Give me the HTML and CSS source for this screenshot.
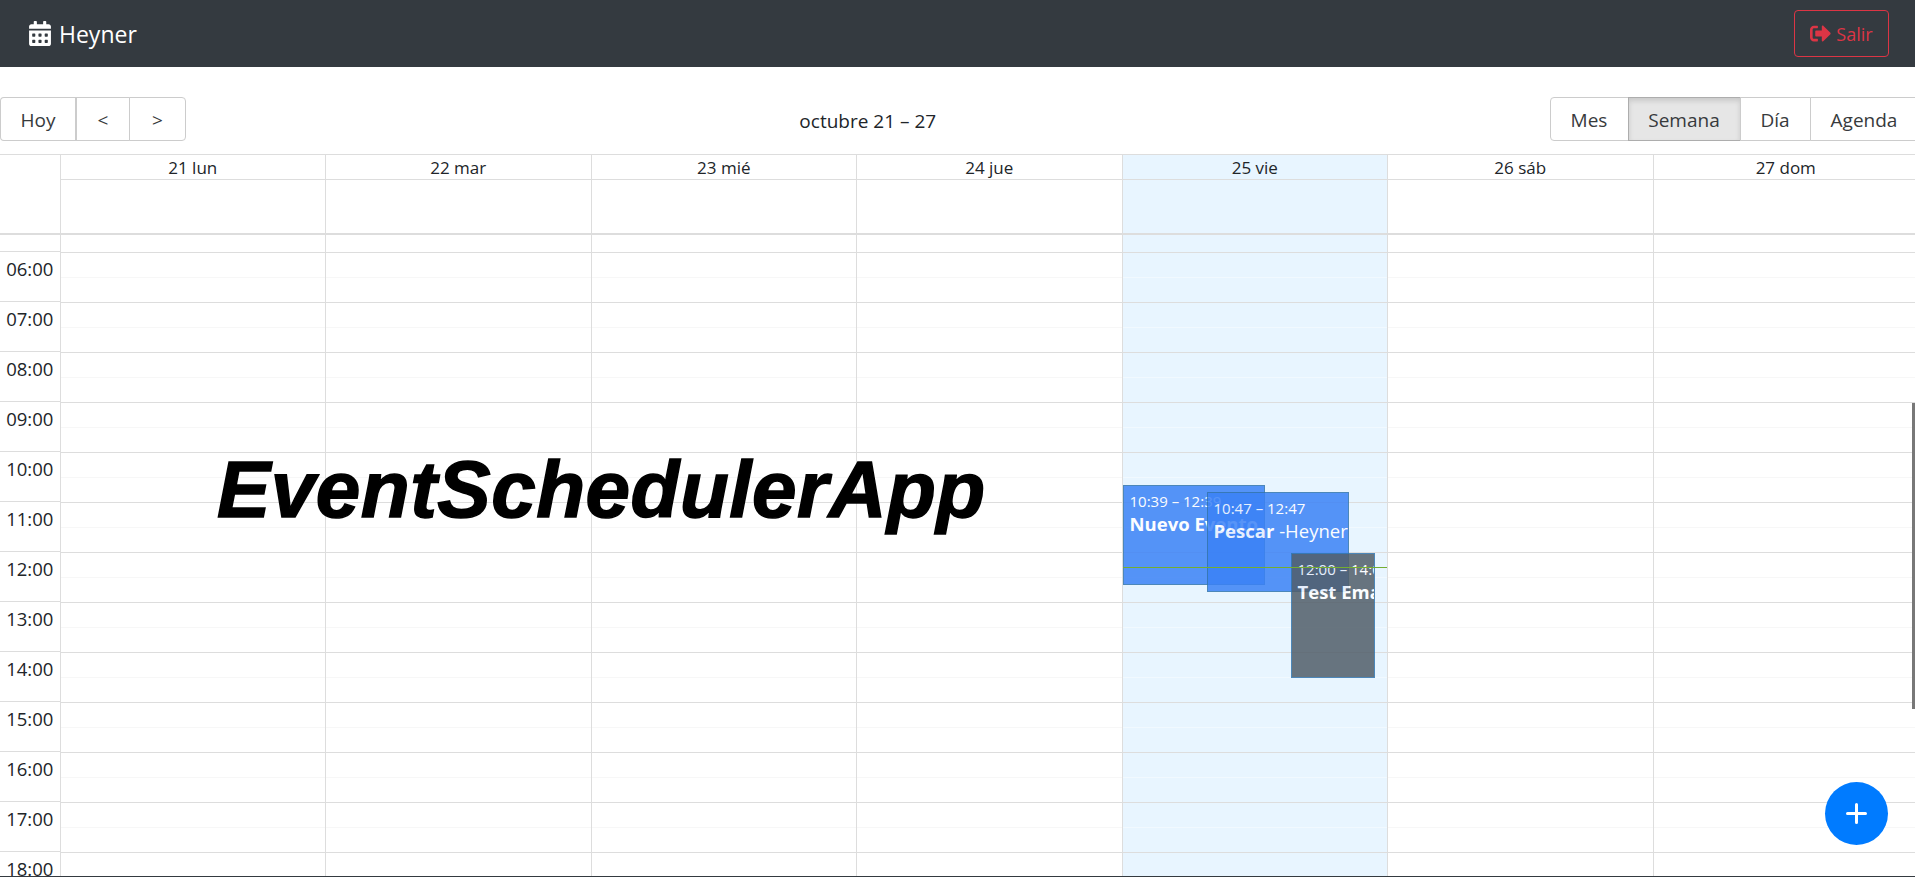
FILE: index.html
```html
<!DOCTYPE html>
<html lang="es">
<head>
    <meta charset="UTF-8">
    <title>EventSchedulerApp</title>
    <link rel="stylesheet" href="styles.css">
</head>
<body>
    <nav class="navbar">
        <span class="brand">
            <svg class="brand-icon" viewBox="0 0 448 512"><path d="M0 464c0 26.5 21.5 48 48 48h352c26.5 0 48-21.5 48-48V192H0v272zm320-196c0-6.6 5.4-12 12-12h40c6.6 0 12 5.4 12 12v40c0 6.6-5.4 12-12 12h-40c-6.6 0-12-5.4-12-12v-40zm0 128c0-6.6 5.4-12 12-12h40c6.6 0 12 5.4 12 12v40c0 6.6-5.4 12-12 12h-40c-6.6 0-12-5.4-12-12v-40zM192 268c0-6.6 5.4-12 12-12h40c6.6 0 12 5.4 12 12v40c0 6.6-5.4 12-12 12h-40c-6.6 0-12-5.4-12-12v-40zm0 128c0-6.6 5.4-12 12-12h40c6.6 0 12 5.4 12 12v40c0 6.6-5.4 12-12 12h-40c-6.6 0-12-5.4-12-12v-40zM64 268c0-6.6 5.4-12 12-12h40c6.6 0 12 5.4 12 12v40c0 6.6-5.4 12-12 12H76c-6.6 0-12-5.4-12-12v-40zm0 128c0-6.6 5.4-12 12-12h40c6.6 0 12 5.4 12 12v40c0 6.6-5.4 12-12 12H76c-6.6 0-12-5.4-12-12v-40zM400 64h-48V16c0-8.8-7.2-16-16-16h-32c-8.8 0-16 7.2-16 16v48H160V16c0-8.8-7.2-16-16-16h-32c-8.8 0-16 7.2-16 16v48H48C21.5 64 0 85.5 0 112v48h448v-48c0-26.5-21.5-48-48-48z"/></svg>
            Heyner
        </span>
        <button class="btn-logout">
            <svg class="logout-icon" viewBox="0 0 512 512"><path d="M497 273L329 441c-15 15-41 4.5-41-17v-96H152c-13.3 0-24-10.7-24-24v-96c0-13.3 10.7-24 24-24h136V88c0-21.4 25.9-32 41-17l168 168c9.3 9.4 9.3 24.6 0 34zM192 436v-40c0-6.6-5.4-12-12-12H96c-17.7 0-32-14.3-32-32V160c0-17.7 14.3-32 32-32h84c6.6 0 12-5.4 12-12V76c0-6.6-5.4-12-12-12H96c-53 0-96 43-96 96v192c0 53 43 96 96 96h84c6.6 0 12-5.4 12-12z"/></svg>
            Salir
        </button>
    </nav>

    <main class="calendar">
        <div class="toolbar">
            <div class="btn-group">
                <button class="btn btn-today">Hoy</button>
                <button class="btn btn-prev">&lt;</button>
                <button class="btn btn-next">&gt;</button>
            </div>
            <span class="toolbar-label">octubre 21 – 27</span>
            <div class="btn-group">
                <button class="btn btn-month">Mes</button>
                <button class="btn btn-week active">Semana</button>
                <button class="btn btn-day">Día</button>
                <button class="btn btn-agenda">Agenda</button>
            </div>
        </div>

        <div class="header">
            <div class="header-gutter"></div>
            <div class="header-day"><div class="header-cell">21 lun</div></div>
            <div class="header-day"><div class="header-cell">22 mar</div></div>
            <div class="header-day"><div class="header-cell">23 mié</div></div>
            <div class="header-day"><div class="header-cell">24 jue</div></div>
            <div class="header-day today"><div class="header-cell">25 vie</div></div>
            <div class="header-day"><div class="header-cell">26 sáb</div></div>
            <div class="header-day"><div class="header-cell">27 dom</div></div>
        </div>

        <div class="time-grid">
            <div class="gutter">
                <div class="gutter-top"></div>
                <div class="time-label">06:00</div>
                <div class="time-label">07:00</div>
                <div class="time-label">08:00</div>
                <div class="time-label">09:00</div>
                <div class="time-label">10:00</div>
                <div class="time-label">11:00</div>
                <div class="time-label">12:00</div>
                <div class="time-label">13:00</div>
                <div class="time-label">14:00</div>
                <div class="time-label">15:00</div>
                <div class="time-label">16:00</div>
                <div class="time-label">17:00</div>
                <div class="time-label">18:00</div>
            </div>
            <div class="day"></div>
            <div class="day"></div>
            <div class="day"></div>
            <div class="day"></div>
            <div class="day today">
                <div class="event event-nuevo">
                    <div class="event-time">10:39 – 12:39</div>
                    <div class="event-title"><strong>Nuevo Evento</strong></div>
                </div>
                <div class="event event-pescar">
                    <div class="event-time">10:47 – 12:47</div>
                    <div class="event-title"><strong>Pescar</strong> -Heyner</div>
                </div>
                <div class="event event-test">
                    <div class="event-time">12:00 – 14:00</div>
                    <div class="event-title"><strong>Test Email</strong></div>
                </div>
                <div class="now-line"></div>
            </div>
            <div class="day"></div>
            <div class="day"></div>
        </div>

        <h1 class="app-title">EventSchedulerApp</h1>
    </main>

    <div class="scroll-thumb"></div>
    <button class="fab" aria-label="Nuevo evento">
        <svg viewBox="0 0 21 21"><path d="M10.5 1.5v18M1.5 10.5h18"/></svg>
    </button>
    <div class="bottom-edge"></div>
</body>
</html>
```

FILE: styles.css
```css
* {
    box-sizing: border-box;
}
html, body {
    height: 100%;
}
body {
    margin: 0;
    display: flex;
    flex-direction: column;
    overflow: hidden;
    font-family: "Open Sans", "Noto Sans", Arial, sans-serif;
    font-size: 17px;
    color: #212529;
    background-color: #fff;
}

/* navbar */
.navbar {
    flex: none;
    height: 67px;
    display: flex;
    align-items: center;
    justify-content: space-between;
    padding: 0 26px 0 29px;
    background-color: #343a40;
}
.brand {
    display: flex;
    align-items: center;
    gap: 8px;
    font-size: 23px;
    color: #fff;
}
.brand-icon {
    width: 22px;
    height: 25px;
    fill: #fff;
}
.btn-logout {
    width: 95px;
    height: 47px;
    display: flex;
    align-items: center;
    justify-content: center;
    gap: 5px;
    font: inherit;
    font-size: 18px;
    color: #dc3545;
    background: none;
    border: 1px solid #dc3545;
    border-radius: 4px;
}
.logout-icon {
    width: 21px;
    height: 21px;
    fill: #dc3545;
}

/* calendar */
.calendar {
    flex: 1;
    min-height: 0;
    width: 1918.5px;
    display: flex;
    flex-direction: column;
    overflow: hidden;
    position: relative;
}
.toolbar {
    flex: none;
    display: flex;
    align-items: center;
    padding: 30px 0 13px;
}
.toolbar-label {
    flex: 1;
    padding-top: 3px;
    text-align: center;
    font-size: 19px;
}
.btn-group {
    display: flex;
}
.btn {
    height: 44px;
    padding: 2px 0 0;
    font: inherit;
    font-size: 19px;
    color: #373a3c;
    background: #fff;
    border: 1px solid #ccc;
    margin-left: -1px;
}
.btn-group .btn:first-child {
    margin-left: 0;
    border-radius: 4px 0 0 4px;
}
.btn-group .btn:last-child {
    border-radius: 0 4px 4px 0;
}
.btn.active {
    background-color: #e6e6e6;
    border-color: #adadad;
    box-shadow: inset 0 3px 5px rgba(0, 0, 0, .125);
}
.btn-today { width: 77px; border-right-width: 2px; }
.btn-prev { width: 54px; }
.btn-next { width: 57px; }
.btn-month { width: 79px; }
.btn-week { width: 113px; }
.btn-day { width: 71px; }
.btn-agenda { width: 109px; }

.header {
    flex: none;
    display: grid;
    grid-template-columns: 59.5px repeat(7, 265.5px);
    height: 81px;
    border-top: 1px solid #ddd;
    border-bottom: 2px solid #ddd;
}
.header-day {
    border-left: 1px solid #ddd;
}
.header-cell {
    height: 25px;
    line-height: 25px;
    text-align: center;
    border-bottom: 1px solid #ddd;
}
.today {
    background-color: #e8f5ff;
}

.time-grid {
    flex: 1;
    min-height: 0;
    display: grid;
    grid-template-columns: 59.5px repeat(7, 265.5px);
    overflow: hidden;
}
.gutter-top {
    height: 17px;
    border-bottom: 1px solid #ddd;
}
.time-label {
    height: 50px;
    padding-top: 2px;
    font-size: 18.5px;
    line-height: 30px;
    text-align: center;
    border-bottom: 1px solid #ddd;
}
.day {
    position: relative;
    border-left: 1px solid #ddd;
    background-image: repeating-linear-gradient(
        #f7f7f7 0, #f7f7f7 1px,
        transparent 1px, transparent 25px,
        #ddd 25px, #ddd 26px,
        transparent 26px, transparent 50px
    );
    background-position: 0 -8px;
}
.day.today {
    background-image: repeating-linear-gradient(
        #f1f9ff 0, #f1f9ff 1px,
        transparent 1px, transparent 25px,
        #ddd 25px, #ddd 26px,
        transparent 26px, transparent 50px
    );
}

/* events sit over the slot lines */
.event {
    position: absolute;
    padding: 5px 6px;
    color: #fff;
    white-space: nowrap;
    overflow: hidden;
    background-color: #3b82f6;
    border: 1px solid #3174ad;
    opacity: .85;
}
.event-time {
    font-size: 15px;
    line-height: 20px;
}
.event-title {
    font-size: 18.5px;
    line-height: 25px;
}
.event-nuevo { left: 0; top: 250px; width: 142px; height: 100px; }
.event-pescar { left: 84px; top: 257px; width: 142px; height: 100px; }
.event-test { left: 168px; top: 318px; width: 84px; height: 125px; background-color: #515e69; }
.now-line {
    position: absolute;
    left: 0;
    right: 0;
    top: 332px;
    height: 1px;
    background-color: #74ad31;
}

.app-title {
    position: absolute;
    left: 217px;
    top: 373px;
    margin: 0;
    font-family: "Liberation Sans", Arial, sans-serif;
    font-size: 80px;
    font-weight: bold;
    font-style: italic;
    line-height: 100px;
    letter-spacing: .5px;
    -webkit-text-stroke: 1.5px #000;
    color: #000;
}

.scroll-thumb {
    position: absolute;
    right: 0;
    top: 403px;
    width: 3px;
    height: 306px;
    background-color: #787878;
}
.fab {
    position: absolute;
    left: 1825px;
    top: 782px;
    width: 63px;
    height: 63px;
    padding: 0;
    display: flex;
    align-items: center;
    justify-content: center;
    background-color: #007bff;
    border: none;
    border-radius: 50%;
}
.fab svg {
    width: 21px;
    height: 21px;
    fill: none;
    stroke: #fff;
    stroke-width: 3;
    stroke-linecap: round;
}
.bottom-edge {
    flex: none;
    height: 1px;
    background-color: #343a40;
}
```
